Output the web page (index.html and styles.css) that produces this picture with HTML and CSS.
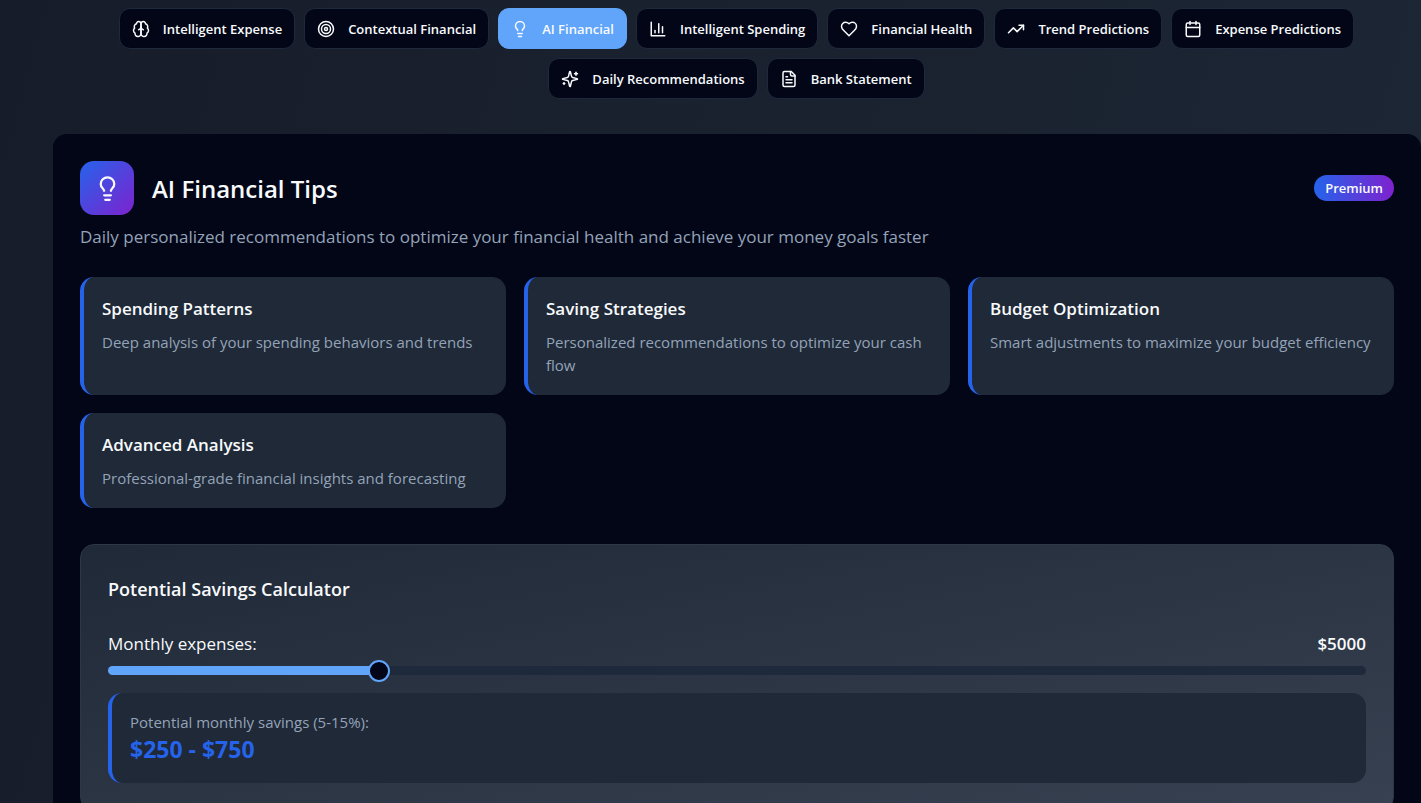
FILE: index.html
```html
<!DOCTYPE html>
<html lang="en">
<head>
    <meta charset="UTF-8">
    <meta name="viewport" content="width=device-width, initial-scale=1.0">
    <title>AI Financial Tips</title>
    <link rel="stylesheet" href="styles.css">
</head>
<body>
    <!-- Feature tabs -->
    <nav class="tabs">
        <button type="button" class="tab">
            <svg class="icon" viewBox="0 0 24 24"><path d="M12 5a3 3 0 1 0-5.997.125 4 4 0 0 0-2.526 5.77 4 4 0 0 0 .556 6.588A4 4 0 1 0 12 18Z"/><path d="M12 5a3 3 0 1 1 5.997.125 4 4 0 0 1 2.526 5.77 4 4 0 0 1-.556 6.588A4 4 0 1 1 12 18Z"/><path d="M15 13a4.5 4.5 0 0 1-3-4 4.5 4.5 0 0 1-3 4"/></svg>
            Intelligent Expense
        </button>
        <button type="button" class="tab">
            <svg class="icon" viewBox="0 0 24 24"><circle cx="12" cy="12" r="10"/><circle cx="12" cy="12" r="6"/><circle cx="12" cy="12" r="2"/></svg>
            Contextual Financial
        </button>
        <button type="button" class="tab active">
            <svg class="icon" viewBox="0 0 24 24"><path d="M15 14c.2-1 .7-1.7 1.5-2.5 1-.9 1.5-2.2 1.5-3.5A6 6 0 0 0 6 8c0 1 .2 2.2 1.5 3.5.7.7 1.3 1.5 1.5 2.5"/><path d="M9 18h6"/><path d="M10 22h4"/></svg>
            AI Financial
        </button>
        <button type="button" class="tab">
            <svg class="icon" viewBox="0 0 24 24"><path d="M3 3v18h18"/><path d="M18 17V9"/><path d="M13 17V5"/><path d="M8 17v-3"/></svg>
            Intelligent Spending
        </button>
        <button type="button" class="tab">
            <svg class="icon" viewBox="0 0 24 24"><path d="M19 14c1.49-1.46 3-3.21 3-5.5A5.5 5.5 0 0 0 16.5 3c-1.76 0-3 .5-4.5 2-1.5-1.5-2.74-2-4.5-2A5.5 5.5 0 0 0 2 8.5c0 2.3 1.5 4.05 3 5.5l7 7Z"/></svg>
            Financial Health
        </button>
        <button type="button" class="tab">
            <svg class="icon" viewBox="0 0 24 24"><path d="M22 7 13.5 15.5 8.5 10.5 2 17"/><path d="M16 7h6v6"/></svg>
            Trend Predictions
        </button>
        <button type="button" class="tab">
            <svg class="icon" viewBox="0 0 24 24"><path d="M8 2v4"/><path d="M16 2v4"/><rect width="18" height="18" x="3" y="4" rx="2"/><path d="M3 10h18"/></svg>
            Expense Predictions
        </button>
        <button type="button" class="tab">
            <svg class="icon" viewBox="0 0 24 24"><path d="M9.937 15.5A2 2 0 0 0 8.5 14.063l-6.135-1.582a.5.5 0 0 1 0-.962L8.5 9.936A2 2 0 0 0 9.937 8.5l1.582-6.135a.5.5 0 0 1 .963 0L14.063 8.5A2 2 0 0 0 15.5 9.937l6.135 1.581a.5.5 0 0 1 0 .964L15.5 14.063a2 2 0 0 0-1.437 1.437l-1.582 6.135a.5.5 0 0 1-.963 0z"/><path d="M20 3v4"/><path d="M22 5h-4"/><path d="M4 17v2"/><path d="M5 18H3"/></svg>
            Daily Recommendations
        </button>
        <button type="button" class="tab">
            <svg class="icon" viewBox="0 0 24 24"><path d="M15 2H6a2 2 0 0 0-2 2v16a2 2 0 0 0 2 2h12a2 2 0 0 0 2-2V7Z"/><path d="M14 2v4a2 2 0 0 0 2 2h4"/><path d="M10 9H8"/><path d="M16 13H8"/><path d="M16 17H8"/></svg>
            Bank Statement
        </button>
    </nav>

    <main class="panel">
        <header class="panel-header">
            <span class="panel-icon">
                <svg viewBox="0 0 24 24"><path d="M15 14c.2-1 .7-1.7 1.5-2.5 1-.9 1.5-2.2 1.5-3.5A6 6 0 0 0 6 8c0 1 .2 2.2 1.5 3.5.7.7 1.3 1.5 1.5 2.5"/><path d="M9 18h6"/><path d="M10 22h4"/></svg>
            </span>
            <h1>AI Financial Tips</h1>
            <span class="badge">Premium</span>
        </header>
        <p class="intro">Daily personalized recommendations to optimize your financial health and achieve your money goals faster</p>

        <section class="features">
            <article class="feature">
                <h2>Spending Patterns</h2>
                <p>Deep analysis of your spending behaviors and trends</p>
            </article>
            <article class="feature">
                <h2>Saving Strategies</h2>
                <p>Personalized recommendations to optimize your cash flow</p>
            </article>
            <article class="feature">
                <h2>Budget Optimization</h2>
                <p>Smart adjustments to maximize your budget efficiency</p>
            </article>
            <article class="feature">
                <h2>Advanced Analysis</h2>
                <p>Professional-grade financial insights and forecasting</p>
            </article>
        </section>

        <!-- Savings calculator -->
        <section class="calculator">
            <h2>Potential Savings Calculator</h2>
            <div class="slider-row">
                <label for="expenses">Monthly expenses:</label>
                <output id="expenses-value" for="expenses">$5000</output>
            </div>
            <input type="range" id="expenses" class="slider" min="1000" max="20000" step="100" value="5000" style="--fill: 21.5%">
            <div class="result">
                <p>Potential monthly savings (5-15%):</p>
                <strong id="savings">$250 - $750</strong>
            </div>
        </section>
    </main>
    <script src="script.js"></script>
</body>
</html>
```
FILE: styles.css
```css
* {
    box-sizing: border-box;
}
body {
    margin: 0;
    min-height: 100vh;
    font-family: "Segoe UI", "Open Sans", "Noto Sans", sans-serif;
    color: #f8fafc;
    background: linear-gradient(105deg, #171c2a, #1d2735);
    overflow: hidden;
}
h1, h2, p {
    margin: 0;
}
svg {
    fill: none;
    stroke: currentColor;
    stroke-width: 2;
    stroke-linecap: round;
    stroke-linejoin: round;
}

/* Tabs */
.tabs {
    display: flex;
    flex-wrap: wrap;
    justify-content: center;
    gap: 9px;
    padding: 8px 0 0 52px;
}
.tab {
    display: flex;
    align-items: center;
    gap: 13px;
    height: 41px;
    padding: 0 12px;
    border: 1px solid #1e293b;
    border-radius: 11px;
    background: #020617;
    color: #f8fafc;
    font-family: inherit;
    font-size: 13px;
    font-weight: 600;
    cursor: pointer;
}
.tab.active {
    background: #60a5fa;
    border-color: #60a5fa;
}
.icon {
    width: 18px;
    height: 18px;
}

/* Main panel */
.panel {
    margin: 35px 0 0 53px;
    padding: 27px;
    border-radius: 14px;
    background: #020617;
}
.panel-header {
    display: flex;
    align-items: center;
    gap: 18px;
}
.panel-header h1 {
    flex: 1;
    font-size: 24px;
    font-weight: 600;
}
.panel-icon {
    display: flex;
    align-items: center;
    justify-content: center;
    width: 54px;
    height: 54px;
    border-radius: 14px;
    background: linear-gradient(135deg, #2563eb, #7e22ce);
}
.panel-icon svg {
    width: 27px;
    height: 27px;
}
.badge {
    padding: 4px 11px;
    border-radius: 14px;
    background: linear-gradient(90deg, #2563eb, #7e22ce);
    font-size: 13px;
    font-weight: 600;
    line-height: 18px;
}
.intro {
    margin-top: 8px;
    color: #94a3b8;
    font-size: 17px;
    line-height: 27px;
}
.features {
    display: grid;
    grid-template-columns: repeat(3, 1fr);
    gap: 18px;
    margin-top: 27px;
}
.feature {
    padding: 18px;
    border-left: 4px solid #2563eb;
    border-radius: 14px;
    background: #1f2937;
}
.feature h2 {
    font-size: 17px;
    font-weight: 600;
    line-height: 27px;
}
.feature p {
    margin-top: 9px;
    color: #94a3b8;
    font-size: 15px;
    line-height: 23px;
}

/* Calculator */
.calculator {
    margin-top: 36px;
    padding: 27px;
    border: 1px solid #2d3748;
    border-radius: 14px;
    background: linear-gradient(to bottom right, #1f2937, #374151);
}
.calculator h2 {
    font-size: 18px;
    font-weight: 600;
    line-height: 34px;
}
.slider-row {
    display: flex;
    justify-content: space-between;
    margin-top: 24px;
    font-size: 17px;
    line-height: 27px;
}
.slider-row output {
    font-weight: 600;
}
.slider {
    display: block;
    appearance: none;
    width: 100%;
    height: 22px;
    margin: 2px 0 12px;
    background: transparent;
}
.slider::-webkit-slider-runnable-track {
    height: 9px;
    border-radius: 5px;
    background: linear-gradient(90deg, #60a5fa var(--fill), #1e293b var(--fill));
}
.slider::-webkit-slider-thumb {
    appearance: none;
    width: 22px;
    height: 22px;
    margin-top: -6px;
    border: 2px solid #60a5fa;
    border-radius: 50%;
    background: #020617;
}
.result {
    padding: 18px;
    border-left: 4px solid #2563eb;
    border-radius: 14px;
    background: #1f2937;
}
.result p {
    color: #94a3b8;
    font-size: 15px;
    line-height: 23px;
}
.result strong {
    display: block;
    color: #2563eb;
    font-size: 23px;
    line-height: 31px;
}
```
FILE: script.js
```js
const slider = document.getElementById('expenses');

slider.addEventListener('input', function() {
    const value = Number(slider.value);
    const share = (value - slider.min) / (slider.max - slider.min);
    slider.style.setProperty('--fill', share * 100 + '%');
    document.getElementById('expenses-value').textContent = '$' + value;
    document.getElementById('savings').textContent =
        '$' + Math.round(value * 0.05) + ' - $' + Math.round(value * 0.15);
});
```
